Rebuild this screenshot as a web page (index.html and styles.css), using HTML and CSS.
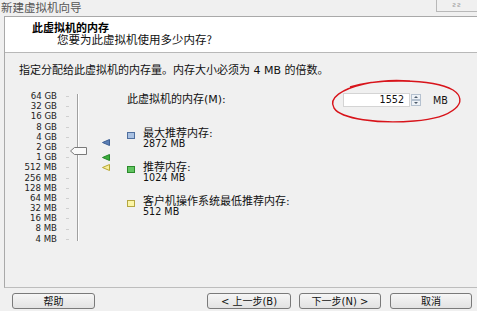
FILE: index.html
```html
<!DOCTYPE html>
<html lang="zh-CN">
<head>
<meta charset="utf-8">
<title>新建虚拟机向导</title>
<link rel="stylesheet" href="styles.css">
</head>
<body>
<div class="window">
  <div class="titlebar">
    <span class="title">新建虚拟机向导</span>
    <span class="corner">ƨƨ</span>
  </div>
  <div class="frame">
    <div class="header">
      <div class="h-title">此虚拟机的内存</div>
      <div class="h-sub">您要为此虚拟机使用多少内存?</div>
    </div>
    <div class="content">
      <p class="intro">指定分配给此虚拟机的内存量。内存大小必须为 4 MB 的倍数。</p>
      <div class="main">
        <div class="slider">
          <ul class="labels">
            <li>64 GB</li><li>32 GB</li><li>16 GB</li><li>8 GB</li><li>4 GB</li>
            <li>2 GB</li><li>1 GB</li><li>512 MB</li><li>256 MB</li><li>128 MB</li>
            <li>64 MB</li><li>32 MB</li><li>16 MB</li><li>8 MB</li><li>4 MB</li>
          </ul>
          <svg class="track" width="60" height="153" viewBox="0 0 60 153">
            <g stroke="#cfcfcf" stroke-width="1">
              <line x1="9" y1="5.5" x2="12" y2="5.5"/>
              <line x1="9" y1="15.5" x2="12" y2="15.5"/>
              <line x1="9" y1="25.5" x2="12" y2="25.5"/>
              <line x1="9" y1="36.5" x2="12" y2="36.5"/>
              <line x1="9" y1="46.5" x2="12" y2="46.5"/>
              <line x1="9" y1="56.5" x2="12" y2="56.5"/>
              <line x1="9" y1="66.5" x2="12" y2="66.5"/>
              <line x1="9" y1="76.5" x2="12" y2="76.5"/>
              <line x1="9" y1="87.5" x2="12" y2="87.5"/>
              <line x1="9" y1="97.5" x2="12" y2="97.5"/>
              <line x1="9" y1="107.5" x2="12" y2="107.5"/>
              <line x1="9" y1="117.5" x2="12" y2="117.5"/>
              <line x1="9" y1="127.5" x2="12" y2="127.5"/>
              <line x1="9" y1="138.5" x2="12" y2="138.5"/>
              <line x1="9" y1="148.5" x2="12" y2="148.5"/>
            </g>
            <line x1="20.5" y1="3" x2="20.5" y2="150" stroke="#a0a0a0"/>
            <line x1="21.5" y1="3" x2="21.5" y2="150" stroke="#ffffff"/>
            <path d="M13.5 60 L17.5 56.5 L29.5 56.5 L29.5 63.5 L17.5 63.5 Z" fill="#fafafa" stroke="#7a7a7a"/>
            <path d="M45.5 51.5 L52.5 48.5 L52.5 54.5 Z" fill="#5b7fb5" stroke="#3d5f94"/>
            <path d="M45.5 66.5 L52.5 63.5 L52.5 69.5 Z" fill="#3cae3c" stroke="#24862a"/>
            <path d="M45.5 76.5 L52.5 73.5 L52.5 79.5 Z" fill="#f6ee9c" stroke="#b8a832"/>
          </svg>
        </div>
        <div class="right">
          <div class="mem-row">
            <span class="mem-label">此虚拟机的内存(M):</span>
            <span class="spin">
              <span class="spin-input">1552</span>
              <span class="spin-btns">
                <svg width="10" height="12" viewBox="0 0 10 12">
                  <rect x="0.5" y="0.5" width="9" height="5" fill="#eef2f7" stroke="#b5c1cf"/>
                  <rect x="0.5" y="6.5" width="9" height="5" fill="#eef2f7" stroke="#b5c1cf"/>
                  <path d="M3 4 L5 2 L7 4 Z" fill="#4d5b6b"/>
                  <path d="M3 8 L5 10 L7 8 Z" fill="#4d5b6b"/>
                </svg>
              </span>
            </span>
            <span class="unit">MB</span>
          </div>
          <ul class="legend">
            <li class="item">
              <span class="sw sw-blue"></span>
              <span class="item-text"><span class="cjk">最大推荐内存:</span><span class="num">2872 MB</span></span>
            </li>
            <li class="item">
              <span class="sw sw-green"></span>
              <span class="item-text"><span class="cjk">推荐内存:</span><span class="num">1024 MB</span></span>
            </li>
            <li class="item">
              <span class="sw sw-yellow"></span>
              <span class="item-text"><span class="cjk">客户机操作系统最低推荐内存:</span><span class="num">512 MB</span></span>
            </li>
          </ul>
        </div>
      </div>
    </div>
  </div>
  <div class="buttons">
    <button class="btn btn-help">帮助</button>
    <span class="spacer"></span>
    <button class="btn btn-back">&lt; 上一步(B)</button>
    <button class="btn btn-next">下一步(N) &gt;</button>
    <button class="btn btn-cancel">取消</button>
  </div>
  <svg class="annot" width="477" height="311" viewBox="0 0 477 311">
    <path d="M350 87 C374 79 432 78 453 90 C470 101 455 118 414 121 C378 124 341 119 334 108 C328 98 342 89 364 84 C382 80 400 80 410 81" fill="none" stroke="#d8141b" stroke-width="1.4"/>
  </svg>
</div>
</body>
</html>
```

FILE: styles.css
```css
* { box-sizing: border-box; }
html, body { margin: 0; padding: 0; }
body {
  width: 477px;
  height: 311px;
  overflow: hidden;
  background: #f0f0f0;
  font-family: "DejaVu Sans", "Noto Sans CJK SC", sans-serif;
  font-size: 11px;
  color: #111;
}
.window {
  position: relative;
  width: 477px;
  height: 311px;
}
.titlebar {
  height: 16px;
  display: flex;
  align-items: flex-start;
  padding-left: 1px;
}
.title {
  font-family: "Noto Sans CJK SC", sans-serif;
  font-size: 11.5px;
  line-height: 15px;
  color: #555;
}
.corner {
  margin-left: auto;
  width: 41px;
  height: 12px;
  border-left: 1px solid #b8b8b8;
  border-bottom: 1px solid #b8b8b8;
  font-size: 7px;
  line-height: 10px;
  color: #999;
  text-align: center;
  letter-spacing: 1px;
}
.frame {
  margin-left: 4px;
  height: 272px;
  border-left: 1px solid #a9a9a9;
  border-top: 1px solid #a9a9a9;
  border-bottom: 1px solid #bdbdbd;
  display: flex;
  flex-direction: column;
}
.header {
  height: 36px;
  background: #fff;
  border-bottom: 1px solid #b8b8b8;
  padding-top: 5px;
}
.h-title {
  font-family: "Noto Sans CJK SC", sans-serif;
  font-weight: 700;
  font-size: 11px;
  line-height: 11px;
  padding-left: 27px;
  color: #000;
}
.h-sub {
  font-family: "Noto Sans CJK SC", sans-serif;
  font-size: 11.5px;
  line-height: 12px;
  padding-left: 52px;
  color: #111;
}
.content {
  padding-left: 14px;
}
.intro {
  margin: 11px 0 14px;
  line-height: 13px;
  font-size: 11px;
  color: #111;
}
.main {
  display: flex;
  margin-left: -14px;
}
.slider {
  display: flex;
}
.labels {
  list-style: none;
  margin: 0;
  padding: 0;
  width: 52px;
  text-align: right;
  font-size: 8.6px;
  color: #222;
}
.labels li {
  height: 10.2px;
  line-height: 10.2px;
}
.track {
  display: block;
}
.right {
  margin-left: 10px;
  display: flex;
  flex-direction: column;
}
.mem-row {
  display: flex;
  align-items: center;
  margin-top: 2px;
  height: 14px;
}
.mem-label {
  width: 216px;
  font-size: 11px;
  line-height: 12px;
}
.spin {
  display: flex;
  align-items: center;
}
.spin-input {
  width: 67px;
  height: 14px;
  background: #fff;
  border: 1px solid #d4d4d4;
  text-align: right;
  padding-right: 5px;
  font-size: 9.6px;
  line-height: 12px;
  color: #111;
}
.spin-btns {
  display: flex;
  margin-left: 1px;
}
.spin-btns svg { display: block; }
.unit {
  margin-left: 12px;
  font-size: 9.6px;
  color: #111;
}
.legend {
  list-style: none;
  margin: 21px 0 0;
  padding: 0;
  display: flex;
  flex-direction: column;
  gap: 13px;
}
.item {
  display: flex;
  align-items: flex-start;
}
.sw {
  width: 8px;
  height: 7px;
  margin-top: 4px;
  margin-right: 8px;
  border: 1px solid;
}
.sw-blue { background: #a9c1e2; border-color: #4f6f9f; }
.sw-green { background: #61c461; border-color: #2b8a2b; }
.sw-yellow { background: #fbf5a6; border-color: #b4a640; }
.item-text {
  display: flex;
  flex-direction: column;
}
.cjk {
  line-height: 11px;
  font-size: 11px;
}
.num {
  line-height: 10px;
  font-size: 9.6px;
}
.buttons {
  display: flex;
  align-items: flex-start;
  padding-top: 5px;
  padding-left: 12px;
}
.btn {
  height: 16px;
  padding: 0;
  border: 1px solid #7a7a7a;
  border-radius: 3px;
  background: linear-gradient(#f6f6f6, #e2e2e2);
  font-family: "DejaVu Sans", "Noto Sans CJK SC", sans-serif;
  font-size: 10px;
  line-height: 13px;
  color: #111;
}
.btn-help { width: 83px; }
.spacer { flex: 0 0 112px; }
.btn-back { width: 84px; }
.btn-next { width: 82px; margin-left: 8px; }
.btn-cancel { width: 82px; margin-left: 9px; }
.annot {
  position: absolute;
  left: 0;
  top: 0;
  pointer-events: none;
}
```
